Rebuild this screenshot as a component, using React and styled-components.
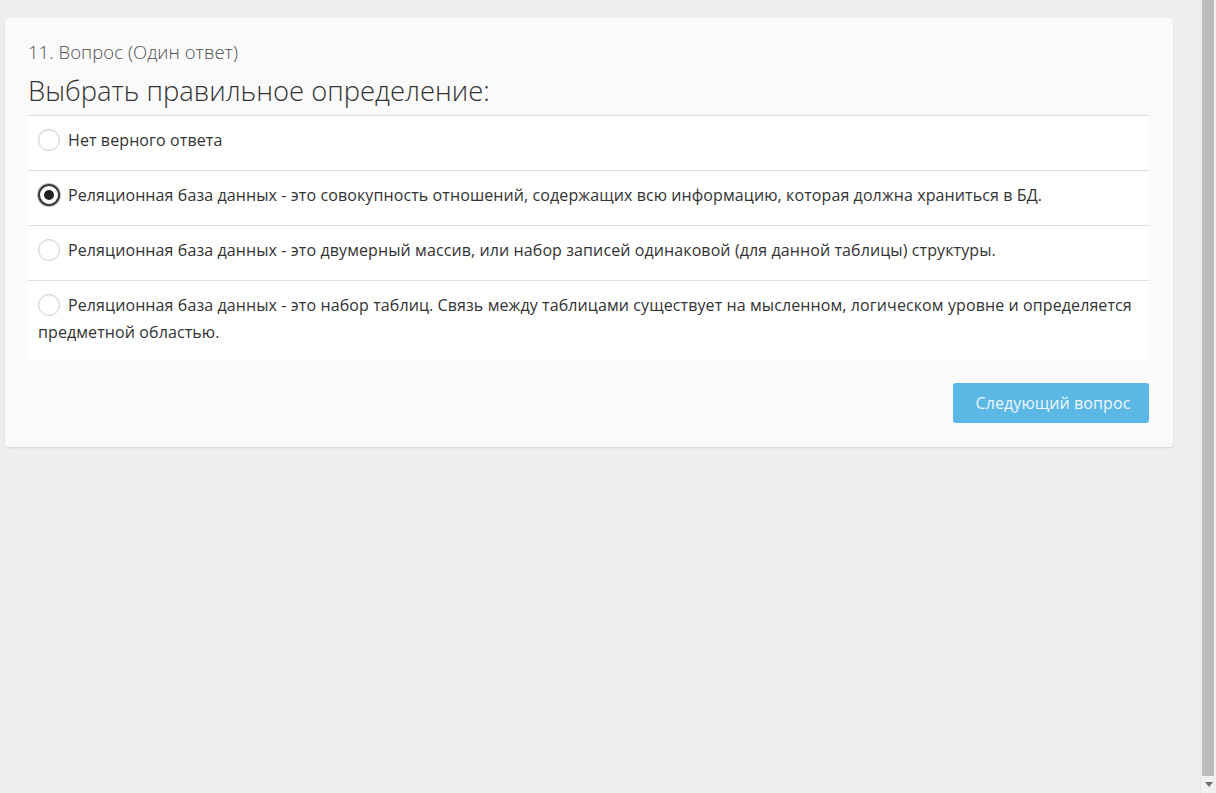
import React from 'react'
import styled, { createGlobalStyle } from 'styled-components'

const Global = createGlobalStyle`
  html, body { margin: 0; padding: 0; height: 100%; overflow: hidden; }
  body { background: #eeeeee; font-family: "Open Sans", "Noto Sans", sans-serif; color: #333; }
  #root { height: 100%; }
`

const Page = styled.div`
  display: flex;
  height: 793px;
`

const Main = styled.div`
  flex: 1;
  padding: 18px 27px 0 5px;
`

const Card = styled.div`
  background: #fafafa;
  border-radius: 3px;
  box-shadow: 0 1px 2px rgba(0,0,0,0.12);
  padding: 22px 24px 24px 23px;
`

const Kind = styled.div`
  font-size: 18.5px;
  font-weight: 300;
  letter-spacing: 0.05px;
  color: #505050;
  line-height: 24px;
`

const Title = styled.h2`
  margin: 11px 0 8px;
  font-size: 27.4px;
  font-weight: 300;
  line-height: 32px;
  color: #333;
`

const List = styled.div`
  background: #fff;
`

const Row = styled.label`
  display: block;
  padding: 11px 10px 16px 10px;
  border-top: 1px solid #dddddd;
  font-size: 16px;
  letter-spacing: 0.1px;
  line-height: 27px;
  color: #333;
  &:last-child { padding-bottom: 15px; }
`

const Radio = styled.span`
  display: inline-block;
  box-sizing: border-box;
  width: 22px;
  height: 22px;
  margin-right: 8px;
  vertical-align: middle;
  margin-top: -3px;
  border-radius: 50%;
  background: #fff;
  border: ${p => (p.$checked ? '2px solid #3a3a3a' : '1px solid #cfcfcf')};
  box-shadow: ${p => (p.$checked ? '0 0 0 1px #bbb' : 'inset 0 1px 2px rgba(0,0,0,0.06)')};
  position: relative;
  &::after {
    content: '';
    display: ${p => (p.$checked ? 'block' : 'none')};
    position: absolute;
    left: 50%;
    top: 50%;
    width: 10px;
    height: 10px;
    margin: -5px 0 0 -5px;
    border-radius: 50%;
    background: #222;
  }
`

const Footer = styled.div`
  display: flex;
  justify-content: flex-end;
  margin-top: 22px;
`

const NextButton = styled.button`
  width: 196px;
  height: 40px;
  padding: 0 0 0 4px;
  border: none;
  border-radius: 3px;
  background: #5bb7e3;
  color: #eef7fc;
  font-family: "Open Sans", "Noto Sans", sans-serif;
  font-size: 16px;
  letter-spacing: 0.1px;
  cursor: pointer;
`

const Scrollbar = styled.div`
  width: 16px;
  display: flex;
  flex-direction: column;
  background: #f1f1f1;
  border-left: 1px solid #e6e6e6;
  box-sizing: border-box;
`

const Thumb = styled.div`
  flex: 1;
  margin: 0 2px 0 1px;
  background: #bcbcbc;
`

const Arrow = styled.div`
  height: 17px;
  display: flex;
  align-items: center;
  justify-content: center;
`

const answers = [
  'Нет верного ответа',
  'Реляционная база данных - это совокупность отношений, содержащих всю информацию, которая должна храниться в БД.',
  'Реляционная база данных - это двумерный массив, или набор записей одинаковой (для данной таблицы) структуры.',
  'Реляционная база данных - это набор таблиц. Связь между таблицами существует на мысленном, логическом уровне и определяется предметной областью.',
]

export default function App() {
  return (
    <Page>
      <Global />
      <Main>
        <Card>
          <Kind>11. Вопрос (Один ответ)</Kind>
          <Title>Выбрать правильное определение:</Title>
          <List>
            {answers.map((a, i) => (
              <Row key={i}>
                <Radio $checked={i === 1} />
                {a}
              </Row>
            ))}
          </List>
          <Footer>
            <NextButton>Следующий вопрос</NextButton>
          </Footer>
        </Card>
      </Main>
      <Scrollbar>
        <Thumb />
        <Arrow>
          <svg width="8" height="5" viewBox="0 0 8 5">
            <path d="M0 0 L8 0 L4 5 Z" fill="#6e6e6e" />
          </svg>
        </Arrow>
      </Scrollbar>
    </Page>
  )
}
